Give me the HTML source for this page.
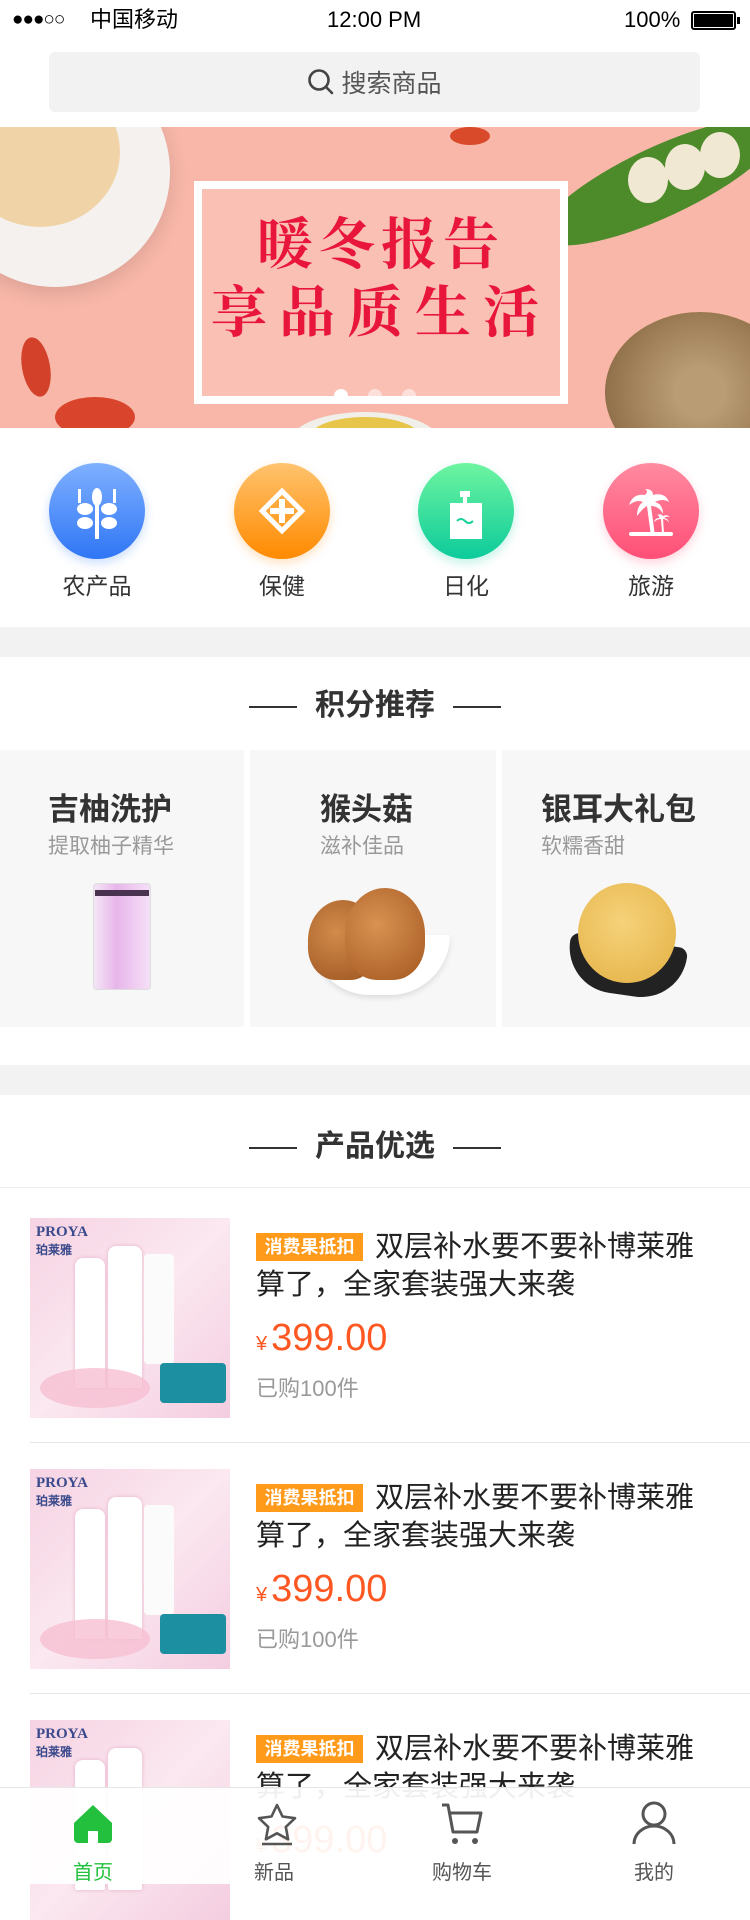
<!DOCTYPE html>
<html><head><meta charset="utf-8">
<style>
*{margin:0;padding:0;box-sizing:border-box}
body{width:750px;height:1884px;overflow:hidden;background:#fff;font-family:"Liberation Sans","Noto Sans CJK SC",sans-serif;position:relative;color:#333}
.abs{position:absolute}
.status{top:0;left:0;width:750px;height:40px;font-size:22px;color:#000}
.status .abs{top:0;line-height:40px;height:40px}
.search{left:49px;top:52px;width:651px;height:60px;background:#f2f2f2;border-radius:6px;font-size:25px;color:#555;display:flex;align-items:center;justify-content:center}
.banner{left:0;top:127px;width:750px;height:301px;background:#f8b7a8;overflow:hidden}
.ic{width:96px;height:96px;border-radius:50%;top:463px}
.lbl{top:567px;font-size:23px;color:#333;width:160px;text-align:center}
.gray{left:0;width:750px;height:30px;background:#f2f2f2}
.sec{left:0;width:750px;text-align:center;font-size:30px;font-weight:bold;color:#333}
.sec span{display:inline-block;width:48px;height:2px;background:#333;vertical-align:middle;margin:0 18px}
.card{top:750px;height:277px;background:#f7f7f7}
.card h3{position:absolute;left:48px;top:34px;font-size:31px;font-weight:bold;color:#333;white-space:nowrap}
.card p{position:absolute;left:48px;top:80px;font-size:21px;color:#999;white-space:nowrap}
.pimg{left:30px;width:200px;height:200px;background:linear-gradient(135deg,#f6d3e3,#fbe8f0 50%,#f4cde0);overflow:hidden}
.tag{left:256px;height:28px;width:107px;background:#ff9a1a;color:#fff;font-size:18px;font-weight:bold;text-align:center;line-height:28px}
.title{left:256px;width:460px;font-size:29px;line-height:38px;color:#222;text-indent:119px}
.price{left:256px;font-size:38px;color:#ff5722}
.price small{font-size:20px;margin-right:4px}
.sold{left:256px;font-size:22px;color:#999}
.sep{left:30px;width:720px;height:1px;background:#e5e5e5}
.tab{left:0;top:1787px;width:750px;height:97px;background:rgba(255,255,255,.93);border-top:1px solid #e6e6e6}
.ti{top:1856px;font-size:20px;width:120px;text-align:center;color:#555}
</style></head><body>

<div class="abs status">
 <div class="abs" style="left:12px;font-size:19px;letter-spacing:-1px">●●●○○</div>
 <div class="abs" style="left:90px">中国移动</div>
 <div class="abs" style="left:327px">12:00 PM</div>
 <div class="abs" style="left:624px">100%</div>
 <div class="abs" style="left:691px;top:11px!important;height:19px!important;line-height:normal!important;width:45px;border:2px solid #000;border-radius:3px;padding:1px"><div style="width:100%;height:100%;background:#000"></div></div>
 <div class="abs" style="left:737px;top:17px!important;width:3px;height:7px!important;background:#000"></div>
</div>

<div class="abs search">
 <svg width="28" height="28" viewBox="0 0 28 28" style="margin-right:6px"><circle cx="12" cy="12" r="9.5" fill="none" stroke="#444" stroke-width="2.6"/><line x1="19" y1="19" x2="25" y2="25" stroke="#444" stroke-width="2.6" stroke-linecap="round"/></svg>搜索商品
</div>

<div class="abs banner">
 <div class="abs" style="left:-60px;top:-70px;width:230px;height:230px;border-radius:50%;background:#f4f1ee;box-shadow:0 6px 20px rgba(0,0,0,.12)"></div>
 <div class="abs" style="left:-40px;top:-50px;width:160px;height:150px;border-radius:50%;background:#f1d3a8"></div>
 <div class="abs" style="left:22px;top:210px;width:28px;height:60px;border-radius:50%;background:#d4412a;transform:rotate(-10deg)"></div>
 <div class="abs" style="left:55px;top:270px;width:80px;height:40px;border-radius:50%;background:#d8452c"></div>
 <div class="abs" style="left:450px;top:0;width:40px;height:18px;border-radius:50%;background:#d84a2a"></div>
 <div class="abs" style="left:530px;top:20px;width:260px;height:70px;border-radius:50%;background:#4c8a2a;transform:rotate(-25deg)"></div>
 <div class="abs" style="left:628px;top:30px;width:40px;height:46px;border-radius:50%;background:#f1e8d4"></div>
 <div class="abs" style="left:665px;top:17px;width:40px;height:46px;border-radius:50%;background:#f1e8d4"></div>
 <div class="abs" style="left:700px;top:5px;width:40px;height:46px;border-radius:50%;background:#f1e8d4"></div>
 <div class="abs" style="left:605px;top:185px;width:190px;height:160px;border-radius:50%;background:radial-gradient(circle,#b99c74 0 20%,#9d7d55 60%,#7d5e3a)"></div>
 <div class="abs" style="left:290px;top:285px;width:150px;height:60px;border-radius:50%;background:#f0efe9"></div>
 <div class="abs" style="left:310px;top:290px;width:110px;height:40px;border-radius:50%;background:#e7c44a"></div>
 <div class="abs" style="left:194px;top:54px;width:374px;height:223px;border:8px solid #fff;background:#fbc0b4;text-align:center;color:#e8163b;font-weight:bold;font-family:'Noto Serif CJK SC','Noto Sans CJK SC',serif">
  <div style="font-size:56px;line-height:64px;margin-top:20px;letter-spacing:6px">暖冬报告</div>
  <div style="font-size:56px;line-height:72px;letter-spacing:12px">享品质生活</div>
 </div>
 <div class="abs" style="left:334px;top:262px;width:14px;height:14px;border-radius:50%;background:#fff"></div>
 <div class="abs" style="left:368px;top:262px;width:14px;height:14px;border-radius:50%;background:rgba(255,255,255,.5)"></div>
 <div class="abs" style="left:402px;top:262px;width:14px;height:14px;border-radius:50%;background:rgba(255,255,255,.5)"></div>
</div>

<div class="abs ic" style="left:49px;background:linear-gradient(#7fb0ff,#2f76f5);box-shadow:0 4px 10px rgba(47,118,245,.25)">
 <svg class="abs" style="left:26px;top:22px" width="44" height="54" viewBox="0 0 44 54"><g fill="#fff"><rect x="20" y="6" width="4" height="48"/><ellipse cx="22" cy="12" rx="5" ry="9"/><rect x="3" y="4" width="3" height="14"/><rect x="38" y="4" width="3" height="14"/><ellipse cx="10" cy="24" rx="8" ry="6"/><ellipse cx="34" cy="24" rx="8" ry="6"/><ellipse cx="10" cy="38" rx="8" ry="6"/><ellipse cx="34" cy="38" rx="8" ry="6"/></g></svg>
</div>
<div class="abs ic" style="left:234px;background:linear-gradient(#ffc36e,#ff8a00);box-shadow:0 4px 10px rgba(255,138,0,.25)">
 <svg class="abs" style="left:23px;top:23px" width="50" height="50" viewBox="0 0 50 50"><rect x="11" y="11" width="28" height="28" fill="none" stroke="#fff" stroke-width="5" transform="rotate(45 25 25)"/><path d="M22 13h6v9h9v6h-9v9h-6v-9h-9v-6h9z" fill="#fff"/></svg>
</div>
<div class="abs ic" style="left:418px;background:linear-gradient(#6ef5a0,#0ccb9b);box-shadow:0 4px 10px rgba(12,203,155,.25)">
 <svg class="abs" style="left:30px;top:28px" width="36" height="50" viewBox="0 0 36 50"><rect x="12" y="0" width="10" height="6" fill="#fff"/><rect x="15" y="6" width="4" height="6" fill="#fff"/><rect x="2" y="12" width="32" height="36" fill="#fff"/><path d="M9 30q4-4 8 0t8 0" stroke="#1bd39c" stroke-width="2" fill="none"/></svg>
</div>
<div class="abs ic" style="left:603px;background:linear-gradient(#ff8aa0,#ff4f77);box-shadow:0 4px 10px rgba(255,79,119,.25)">
 <svg class="abs" style="left:22px;top:24px" width="52" height="52" viewBox="0 0 52 52"><g fill="#fff"><path d="M20 8q-12-2-16 10q8-6 14-3q-6 4-6 14q6-8 10-10l4 30h4l-4-30q8 0 12 8q0-10-8-12q8-4 14 0q-4-10-16-7q0-6-8-6q4 2 0 6z"/><path d="M36 32l1 14h2l-1-14q4 0 6 4q-1-5-5-5q2-2 6-1q-3-3-7-1q-2-3-6-1q3 1 2 3q-4 0-5 4q3-3 7-3z"/><rect x="4" y="45" width="44" height="4" rx="2"/></g></svg>
</div>
<div class="abs lbl" style="left:17px">农产品</div>
<div class="abs lbl" style="left:202px">保健</div>
<div class="abs lbl" style="left:386px">日化</div>
<div class="abs lbl" style="left:571px">旅游</div>

<div class="abs gray" style="top:627px"></div>
<div class="abs sec" style="top:680px"><span></span>积分推荐<span></span></div>

<div class="abs card" style="left:0;width:244px"><h3>吉柚洗护</h3><p>提取柚子精华</p>
 <div class="abs" style="left:93px;top:133px;width:58px;height:107px;border-radius:4px;background:linear-gradient(90deg,#f3e6f5,#e8b5ea 40%,#f5e0f7);border:1px solid #ddd"></div>
 <div class="abs" style="left:95px;top:140px;width:54px;height:6px;background:#4a3350"></div>
</div>
<div class="abs card" style="left:250px;width:246px"><h3 style="left:70px">猴头菇</h3><p style="left:70px">滋补佳品</p>
 <div class="abs" style="left:60px;top:185px;width:140px;height:60px;border-radius:0 0 70px 70px;background:#fff;box-shadow:0 3px 6px rgba(0,0,0,.1)"></div>
 <div class="abs" style="left:58px;top:150px;width:70px;height:80px;border-radius:50% 50% 40% 40%;background:radial-gradient(circle at 40% 40%,#d28b4a,#9c5420)"></div>
 <div class="abs" style="left:95px;top:138px;width:80px;height:92px;border-radius:50% 50% 40% 40%;background:radial-gradient(circle at 40% 40%,#d99252,#a4581f)"></div>
</div>
<div class="abs card" style="left:502px;width:248px"><h3 style="left:39px">银耳大礼包</h3><p style="left:39px">软糯香甜</p>
 <div class="abs" style="left:65px;top:190px;width:118px;height:55px;border-radius:10px 10px 50px 50px;background:#222;transform:rotate(8deg)"></div>
 <div class="abs" style="left:76px;top:133px;width:98px;height:100px;border-radius:50%;background:radial-gradient(circle at 45% 40%,#f6d27a,#e3b043)"></div>
</div>

<div class="abs gray" style="top:1065px"></div>
<div class="abs sec" style="top:1121px"><span></span>产品优选<span></span></div>
<div class="abs" style="left:0;top:1187px;width:750px;height:1px;background:#eee"></div>

<div class="abs pimg" style="top:1218px"><div class="abs" style="left:6px;top:6px;color:#3a4a8c;font:bold 15px 'Liberation Serif',serif">PROYA<br><span style="font-size:12px">珀莱雅</span></div><div class="abs" style="left:45px;top:40px;width:30px;height:130px;background:#fff;border-radius:8px 8px 2px 2px;box-shadow:0 0 4px #e6b2c8"></div><div class="abs" style="left:78px;top:28px;width:34px;height:142px;background:#fff;border-radius:8px 8px 2px 2px;box-shadow:0 0 4px #e6b2c8"></div><div class="abs" style="left:114px;top:36px;width:30px;height:110px;background:#fbfbfb;border-radius:4px"></div><div class="abs" style="left:130px;top:145px;width:66px;height:40px;background:#1c8fa0;border-radius:4px"></div><div class="abs" style="left:10px;top:150px;width:110px;height:40px;border-radius:50%;background:#f6bfd2;opacity:.8"></div></div>
<div class="abs tag" style="top:1233px">消费果抵扣</div>
<div class="abs title" style="top:1228px">双层补水要不要补博莱雅算了，全家套装强大来袭</div>
<div class="abs price" style="top:1317px"><small>¥</small>399.00</div>
<div class="abs sold" style="top:1371px">已购100件</div>
<div class="abs sep" style="top:1442px"></div>

<div class="abs pimg" style="top:1469px"><div class="abs" style="left:6px;top:6px;color:#3a4a8c;font:bold 15px 'Liberation Serif',serif">PROYA<br><span style="font-size:12px">珀莱雅</span></div><div class="abs" style="left:45px;top:40px;width:30px;height:130px;background:#fff;border-radius:8px 8px 2px 2px;box-shadow:0 0 4px #e6b2c8"></div><div class="abs" style="left:78px;top:28px;width:34px;height:142px;background:#fff;border-radius:8px 8px 2px 2px;box-shadow:0 0 4px #e6b2c8"></div><div class="abs" style="left:114px;top:36px;width:30px;height:110px;background:#fbfbfb;border-radius:4px"></div><div class="abs" style="left:130px;top:145px;width:66px;height:40px;background:#1c8fa0;border-radius:4px"></div><div class="abs" style="left:10px;top:150px;width:110px;height:40px;border-radius:50%;background:#f6bfd2;opacity:.8"></div></div>
<div class="abs tag" style="top:1484px">消费果抵扣</div>
<div class="abs title" style="top:1479px">双层补水要不要补博莱雅算了，全家套装强大来袭</div>
<div class="abs price" style="top:1568px"><small>¥</small>399.00</div>
<div class="abs sold" style="top:1622px">已购100件</div>
<div class="abs sep" style="top:1693px"></div>

<div class="abs pimg" style="top:1720px"><div class="abs" style="left:6px;top:6px;color:#3a4a8c;font:bold 15px 'Liberation Serif',serif">PROYA<br><span style="font-size:12px">珀莱雅</span></div><div class="abs" style="left:45px;top:40px;width:30px;height:130px;background:#fff;border-radius:8px 8px 2px 2px;box-shadow:0 0 4px #e6b2c8"></div><div class="abs" style="left:78px;top:28px;width:34px;height:142px;background:#fff;border-radius:8px 8px 2px 2px;box-shadow:0 0 4px #e6b2c8"></div></div>
<div class="abs tag" style="top:1735px">消费果抵扣</div>
<div class="abs title" style="top:1730px">双层补水要不要补博莱雅算了，全家套装强大来袭</div>
<div class="abs price" style="top:1819px"><small>¥</small>399.00</div>

<div class="abs tab">
 <svg class="abs" style="left:72px;top:15px" width="42" height="42" viewBox="0 0 42 42"><path d="M21 2L2 20v16a4 4 0 0 0 4 4h10V28h10v12h10a4 4 0 0 0 4-4V20z" fill="#22c03c"/></svg>
 <svg class="abs" style="left:256px;top:14px" width="42" height="44" viewBox="0 0 42 44"><path d="M21 3l5.5 11.5 12.5 1.7-9.2 8.7 2.3 12.4L21 31.3 9.9 37.3l2.3-12.4L3 16.2l12.5-1.7z" fill="none" stroke="#555" stroke-width="2.6" stroke-linejoin="round"/><line x1="6" y1="42" x2="36" y2="42" stroke="#555" stroke-width="2.6"/></svg>
 <svg class="abs" style="left:440px;top:14px" width="44" height="44" viewBox="0 0 44 44"><path d="M2 3h6l5 27h24l4-19H10" fill="none" stroke="#555" stroke-width="3" stroke-linejoin="round"/><circle cx="15" cy="39" r="3" fill="#555"/><circle cx="35" cy="39" r="3" fill="#555"/></svg>
 <svg class="abs" style="left:632px;top:12px" width="44" height="46" viewBox="0 0 44 46"><circle cx="22" cy="14" r="11" fill="none" stroke="#555" stroke-width="3"/><path d="M2 44a20 18 0 0 1 40 0" fill="none" stroke="#555" stroke-width="3"/></svg>
</div>
<div class="abs ti" style="left:33px;color:#22c03c">首页</div>
<div class="abs ti" style="left:214px">新品</div>
<div class="abs ti" style="left:402px">购物车</div>
<div class="abs ti" style="left:594px">我的</div>
</body></html>
